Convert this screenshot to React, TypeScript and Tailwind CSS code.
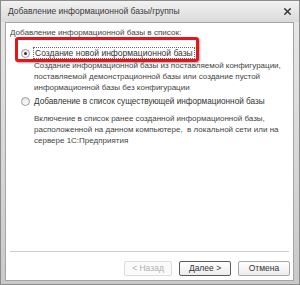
import { X } from 'lucide-react';

function Radio({ checked }: { checked?: boolean }) {
  return (
    <span className="w-[9px] h-[9px] rounded-full border border-[#9a9a9a] bg-gradient-to-b from-[#e6e6e6] to-white flex items-center justify-center shrink-0">
      {checked && <span className="w-[3px] h-[3px] rounded-full bg-[#333]" />}
    </span>
  );
}

export default function App() {
  return (
    <div className="w-[300px] h-[285px] bg-gradient-to-b from-[#e9e9e9] to-[#c9c9c9] border border-[#8c8c8c] flex flex-col overflow-hidden font-['Liberation_Sans',Arial,sans-serif] text-[#333]">
      <div className="h-[21px] shrink-0 flex items-center justify-between pl-[7px] pr-[6px] bg-gradient-to-b from-[#f2f2f2] to-[#dadada]">
        <span className="text-[8.5px] text-[#3a3a3a]">Добавление информационной базы/группы</span>
        <X size={11} strokeWidth={3} className="text-[#333]" />
      </div>

      <div className="flex-1 ml-[4px] mr-[5px] mb-[3px] bg-white border border-[#a5a5a5] flex flex-col relative">
        <div className="pl-[4px] pt-[4px] text-[8.1px] leading-[11px] text-[#444]">
          Добавление информационной базы в список:
        </div>

        <div className="pl-[15px] pt-[9px] flex items-center gap-[3px] text-[8.5px] leading-[11px]">
          <Radio checked />
          <span className="border border-dotted border-[#666] px-[1px] leading-[10px]">Создание новой информационной базы</span>
        </div>
        <div className="pl-[28px] pt-[1px] text-[8px] leading-[11px] text-[#444] whitespace-nowrap">
          <div>Создание информационной базы из поставляемой конфигурации,</div>
          <div>поставляемой демонстрационной базы или создание пустой</div>
          <div>информационной базы без конфигурации</div>
        </div>

        <div className="pl-[15px] pt-[3px] flex items-center gap-[4px] text-[8.2px] leading-[11px]">
          <Radio />
          <span>Добавление в список существующей информационной базы</span>
        </div>
        <div className="pl-[28px] pt-[6px] text-[8px] leading-[11px] text-[#444] whitespace-nowrap">
          <div>Включение в список ранее созданной информационной базы,</div>
          <div>расположенной на данном компьютере,&nbsp; в локальной сети или на</div>
          <div>сервере 1С:Предприятия</div>
        </div>

        <div className="flex-1" />
        <div className="mx-[4px] h-[2px] border-t border-[#cfcfcf] border-b border-b-white" />
        <div className="flex justify-end gap-[7px] pr-[3px] pt-[8px] pb-[4px] text-[8.5px]">
          <button className="w-[48px] h-[15px] border border-[#dcdcdc] rounded-[2px] bg-[#fafafa] text-[#b0b0b0]">&lt; Назад</button>
          <button className="w-[52px] h-[15px] border border-[#5a5a5a] rounded-[2px] bg-gradient-to-b from-white to-[#ececec] text-[#333]">Далее &gt;</button>
          <button className="w-[52px] h-[15px] border border-[#a8a8a8] rounded-[2px] bg-gradient-to-b from-white to-[#ececec] text-[#333]">Отмена</button>
        </div>

        <div className="absolute left-[9px] top-[14px] w-[184px] h-[25px] border-[3px] border-[#e4161b] rounded-[3px] shadow-[1px_1px_2px_rgba(0,0,0,0.35)] pointer-events-none" />
      </div>
    </div>
  );
}
